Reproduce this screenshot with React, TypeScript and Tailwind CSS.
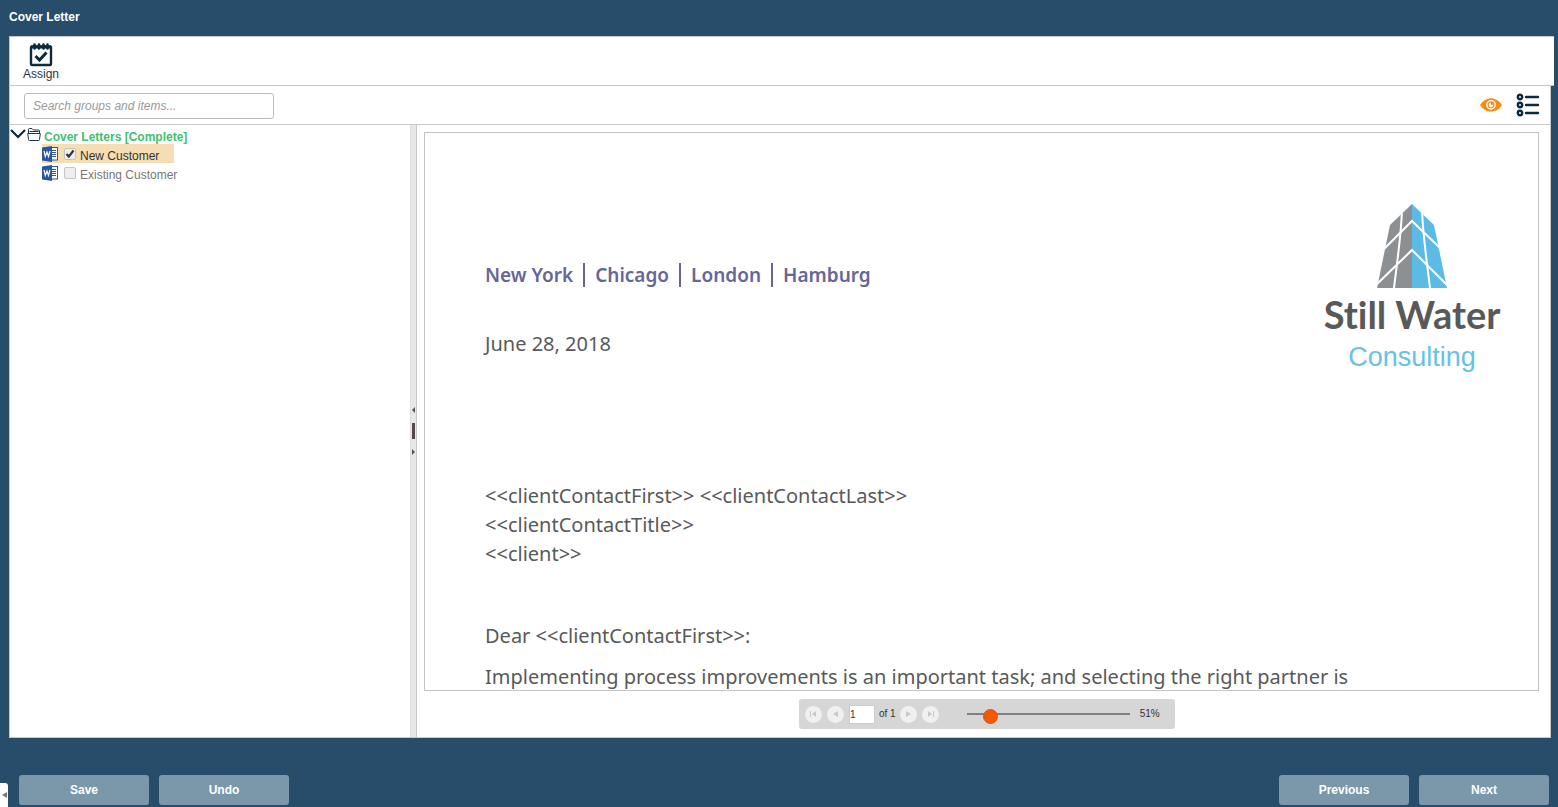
import { useState } from "react";

const ITEMS = [
  { id: "new-customer", label: "New Customer", selected: true },
  { id: "existing-customer", label: "Existing Customer", selected: false },
];

const OFFICES = ["New York", "Chicago", "London", "Hamburg"];

function AssignIcon() {
  return (
    <svg width="24" height="24" viewBox="0 0 24 24" fill="none" stroke="#0b2a40">
      <rect x="2" y="3.5" width="20" height="18.5" rx="1" strokeWidth="2.4" />
      <path d="M2 4h20" strokeWidth="3" />
      <path d="M5.5 1.500v4M10 1.500v4M14.500 1.500v4M18.500 1.500v4" strokeWidth="2.6" strokeLinecap="round" />
      <path d="M6.500 13l4 4 7-7.500" strokeWidth="3" />
    </svg>
  );
}

function EyeIcon() {
  return (
    <svg width="22" height="14" viewBox="0 0 22 14">
      <path d="M0 7C3 2.500 6.800.2 11 .2S19 2.500 22 7c-3 4.500-6.800 6.500-11 6.500S3 11.500 0 7z" fill="#f68b0f" />
      <circle cx="11" cy="6.800" r="4.200" fill="none" stroke="#fff" strokeWidth="1.400" />
      <path d="M11 6.800V4.600a2.300 2.300 0 1 0 2.300 2.200z" fill="#fff" />
    </svg>
  );
}

function ListIcon() {
  return (
    <svg width="24" height="24" viewBox="0 0 24 24" fill="none" stroke="#0b2a40">
      {[4, 12, 20].map((y) => (
        <g key={y}>
          <circle cx="4" cy={y} r="2.2" strokeWidth="2.4" />
          <path d={`M10 ${y}h12`} strokeWidth="2.400" strokeLinecap="round" />
        </g>
      ))}
    </svg>
  );
}

function FolderIcon() {
  return (
    <svg width="14" height="15" viewBox="0 0 14 15" fill="none" stroke="#1c3547" strokeWidth="1">
      <path d="M1.500 6V2.500a1 1 0 0 1 1-1h2.500l1.500 1.500h5a1 1 0 0 1 1 1v2" />
      <path d="M2.500 4.500h9" />
      <path d="M.7 6.500h12.600l-.8 6a1 1 0 0 1-1 1h-9a1 1 0 0 1-1-1z" />
    </svg>
  );
}

function WordIcon() {
  return (
    <svg width="16" height="16" viewBox="0 0 16 16">
      <rect x="8.500" y="1.500" width="7" height="12.500" fill="#fff" stroke="#2b579a" />
      <path d="M10 4.500h4M10 6.500h4M10 8.500h4M10 10.500h4" stroke="#2b579a" />
      <path d="M0 1.500L10 0v16L0 14.500z" fill="#2b579a" />
      <path d="M2 5l1.300 5.500L5 6l1.500 4.500L8 5" fill="none" stroke="#fff" strokeWidth="1.200" />
    </svg>
  );
}

function Tower() {
  return (
    <svg width="72" height="84" viewBox="0 0 72 84">
      <path d="M36 0L14 21 1 84h35z" fill="#8d9093" />
      <path d="M36 0l22 21 13 63H36z" fill="#5cbbe5" />
      <g fill="none" stroke="#fff" strokeWidth="2">
        <path d="M8 45l28-28 28 27" />
        <path d="M0 81l36-35 36 36" />
        <path d="M26 6C25 34 21 58 18 84M46 6C47 34 51 58 54 84" />
      </g>
    </svg>
  );
}

function PagerButton({ label, children }: { label: string; children: React.ReactNode }) {
  return (
    <button aria-label={label} className="flex size-[17px] items-center justify-center rounded-full bg-[#f0f0f0]">
      <svg width="9" height="8" viewBox="0 0 9 8" fill="#c9c9c9" stroke="none">
        {children}
      </svg>
    </button>
  );
}

function FooterButton({ children }: { children: React.ReactNode }) {
  return (
    <button className="h-[30px] w-[130px] rounded-[3px] bg-[#7a98a9] text-xs font-bold text-white hover:bg-[#88a5b5]">
      {children}
    </button>
  );
}

export default function App() {
  const [checked, setChecked] = useState<Record<string, boolean>>({ "new-customer": true });
  const [page, setPage] = useState("1");
  const [zoom, setZoom] = useState(11);

  return (
    <div className="flex h-screen flex-col bg-[#284d6a] font-['Liberation_Sans',Arial,sans-serif] text-xs text-[#333]">
      <header className="h-9 shrink-0 px-[9px] pt-[9px]">
        <h1 className="font-bold leading-4 text-white">Cover Letter</h1>
      </header>

      <main className="flex min-h-0 flex-1 flex-col pl-[9px] pr-1">
        {/* Toolbar */}
        <div className="flex h-[50px] shrink-0 border border-r-0 border-[#c4c9cd] bg-white pl-[13px]">
          <button className="flex flex-col items-center pt-1.5">
            <AssignIcon />
            <span className="leading-[14px]">Assign</span>
          </button>
        </div>

        <div className="mr-[3px] flex min-h-0 flex-1 flex-col border border-t-0 border-[#c4c9cd] bg-white">
          {/* Search and view switches */}
          <div className="flex h-[39px] shrink-0 items-start justify-between border-b border-[#c9c9c9] pl-3.5 pr-2.5 pt-[7px]">
            <input
              type="text"
              aria-label="Search groups and items"
              placeholder="Search groups and items..."
              className="h-[26px] w-[250px] rounded-[3px] border border-[#bbb] px-2 text-xs italic outline-none placeholder:text-[#9a9a9a]"
            />
            <div className="flex items-center gap-3.5">
              <button aria-label="Preview">
                <EyeIcon />
              </button>
              <button aria-label="List view">
                <ListIcon />
              </button>
            </div>
          </div>

          <div className="flex min-h-0 flex-1">
            {/* Tree */}
            <aside className="w-[400px] shrink-0 pt-0.5">
              <div className="flex h-[17px] items-start">
                <button aria-label="Collapse" className="w-[17px] pt-0.5">
                  <svg width="16" height="10" viewBox="0 0 16 10" fill="none" stroke="#0b2a40" strokeWidth="2.2">
                    <path d="M1 1l7 7 7-7" />
                  </svg>
                </button>
                <FolderIcon />
                <span className="pl-[3px] pt-0.5 font-bold leading-4 text-[#3fc171]">Cover Letters [Complete]</span>
              </div>
              <ul className="pl-8">
                {ITEMS.map((item) => (
                  <li key={item.id} className="flex h-[19px]">
                    <label
                      className={`flex h-[19px] items-center pr-[15px] ${item.selected ? "bg-[#f5deb3] text-[#333]" : "text-[#777]"}`}
                    >
                      <WordIcon />
                      <span className="relative ml-1.5 size-3">
                        <input
                          type="checkbox"
                          checked={!!checked[item.id]}
                          onChange={(e) => setChecked({ ...checked, [item.id]: e.target.checked })}
                          className="block size-3 appearance-none rounded-[2px] border border-[#c4c4c4] bg-[#eee]"
                        />
                        {checked[item.id] && (
                          <svg className="pointer-events-none absolute inset-0" width="12" height="12" viewBox="0 0 12 12" fill="none" stroke="#333" strokeWidth="2.200">
                            <path d="M2.500 6l2.300 2.600L9.500 2.500" />
                          </svg>
                        )}
                      </span>
                      <span className="pl-1 pt-1">{item.label}</span>
                    </label>
                  </li>
                ))}
              </ul>
            </aside>

            {/* Splitter */}
            <div className="flex w-[7px] shrink-0 flex-col items-center justify-center gap-2.5 border-x border-[#c9c9c9] border-l-[#ddd] bg-[#e6e7e8]">
              <svg width="3" height="6" viewBox="0 0 3 6" fill="#555">
                <path d="M3 0v6L0 3z" />
              </svg>
              <div className="h-4 w-[3px] bg-[#554a48]" />
              <svg width="3" height="6" viewBox="0 0 3 6" fill="#555">
                <path d="M0 0v6l3-3z" />
              </svg>
            </div>

            {/* Preview */}
            <section className="flex min-w-0 flex-1 flex-col pl-[7px] pr-[11px] pt-[7px]">
              <div className="min-h-0 flex-1 overflow-hidden border border-[#c4c4c4] pl-[60px] pr-[34px] font-['Noto_Sans',sans-serif] text-xl text-[#595959]">
                <div className="flex h-[348px] justify-between">
                  <div className="pt-32">
                    <p className="flex items-center text-[19px] font-semibold leading-7 text-[#666699]">
                      {OFFICES.map((office, i) => (
                        <span key={office} className={i > 0 ? "ml-2.5 border-l-2 border-[#666699] pl-2.5 leading-6" : ""}>
                          {office}
                        </span>
                      ))}
                    </p>
                    <p className="pt-[41px] leading-7">June 28, 2018</p>
                  </div>
                  <div className="flex w-[184px] shrink-0 flex-col items-center pt-[71px]">
                    <Tower />
                    <span className="whitespace-nowrap pt-1.5 font-['Lato',sans-serif] text-[38px] font-bold leading-10 [font-variant-ligatures:none]">
                      Still Water
                    </span>
                    <span className="pt-[3px] font-['Liberation_Sans',Arial,sans-serif] text-[27px] leading-10 text-[#68c1e8]">
                      Consulting
                    </span>
                  </div>
                </div>
                <p className="whitespace-nowrap leading-[29px]">
                  &lt;&lt;clientContactFirst&gt;&gt; &lt;&lt;clientContactLast&gt;&gt;
                  <br />
                  &lt;&lt;clientContactTitle&gt;&gt;
                  <br />
                  &lt;&lt;client&gt;&gt;
                </p>
                <p className="pt-[53px] leading-[29px]">Dear &lt;&lt;clientContactFirst&gt;&gt;:</p>
                <p className="whitespace-nowrap pt-3 leading-[29px]">
                  Implementing process improvements is an important task; and selecting the right partner is
                </p>
              </div>

              {/* Pager */}
              <div className="mb-2 ml-[11px] mt-2 flex h-[30px] w-[376px] shrink-0 items-center self-center rounded-[3px] bg-[#d6d6d6] pl-1.5 text-[10px]">
                <div className="flex gap-[5px]">
                  <PagerButton label="First page">
                    <path d="M1 1h1v6H1zM7 1v6L3 4z" />
                  </PagerButton>
                  <PagerButton label="Previous page">
                    <path d="M7 1v6L2 4z" />
                  </PagerButton>
                </div>
                <input
                  type="text"
                  aria-label="Page"
                  value={page}
                  onChange={(e) => setPage(e.target.value)}
                  className="ml-[5px] h-[19px] w-[26px] border border-[#ccc] bg-white text-[10px] outline-none"
                />
                <span className="pl-1">of 1</span>
                <div className="ml-1 flex gap-[5px]">
                  <PagerButton label="Next page">
                    <path d="M2 1v6l5-3z" />
                  </PagerButton>
                  <PagerButton label="Last page">
                    <path d="M2 1v6l4-3zM7 1h1v6H7z" />
                  </PagerButton>
                </div>
                <input
                  type="range"
                  aria-label="Zoom"
                  min={0}
                  max={100}
                  value={zoom}
                  onChange={(e) => setZoom(Number(e.target.value))}
                  className="ml-7 h-4 w-[163px] appearance-none bg-transparent [&::-webkit-slider-runnable-track]:h-0.5 [&::-webkit-slider-runnable-track]:bg-[#808080] [&::-webkit-slider-thumb]:-mt-1 [&::-webkit-slider-thumb]:size-[15px] [&::-webkit-slider-thumb]:appearance-none [&::-webkit-slider-thumb]:rounded-full [&::-webkit-slider-thumb]:border [&::-webkit-slider-thumb]:border-[#d9531c] [&::-webkit-slider-thumb]:bg-[#f05a00]"
                />
                <span className="pl-2.5">51%</span>
              </div>
            </section>
          </div>
        </div>
      </main>

      <footer className="relative mt-[37px] flex h-8 shrink-0 justify-between pl-[19px] pr-[9px]">
        <button
          aria-label="Expand panel"
          className="absolute bottom-0 left-0 flex h-6 w-2 items-center justify-center rounded-tr-[3px] bg-white"
        >
          <svg width="5" height="6" viewBox="0 0 5 6" fill="#777">
            <path d="M5 0v6L0 3z" />
          </svg>
        </button>
        <div className="flex gap-2.5">
          <FooterButton>Save</FooterButton>
          <FooterButton>Undo</FooterButton>
        </div>
        <div className="flex gap-2.5">
          <FooterButton>Previous</FooterButton>
          <FooterButton>Next</FooterButton>
        </div>
      </footer>
    </div>
  );
}
